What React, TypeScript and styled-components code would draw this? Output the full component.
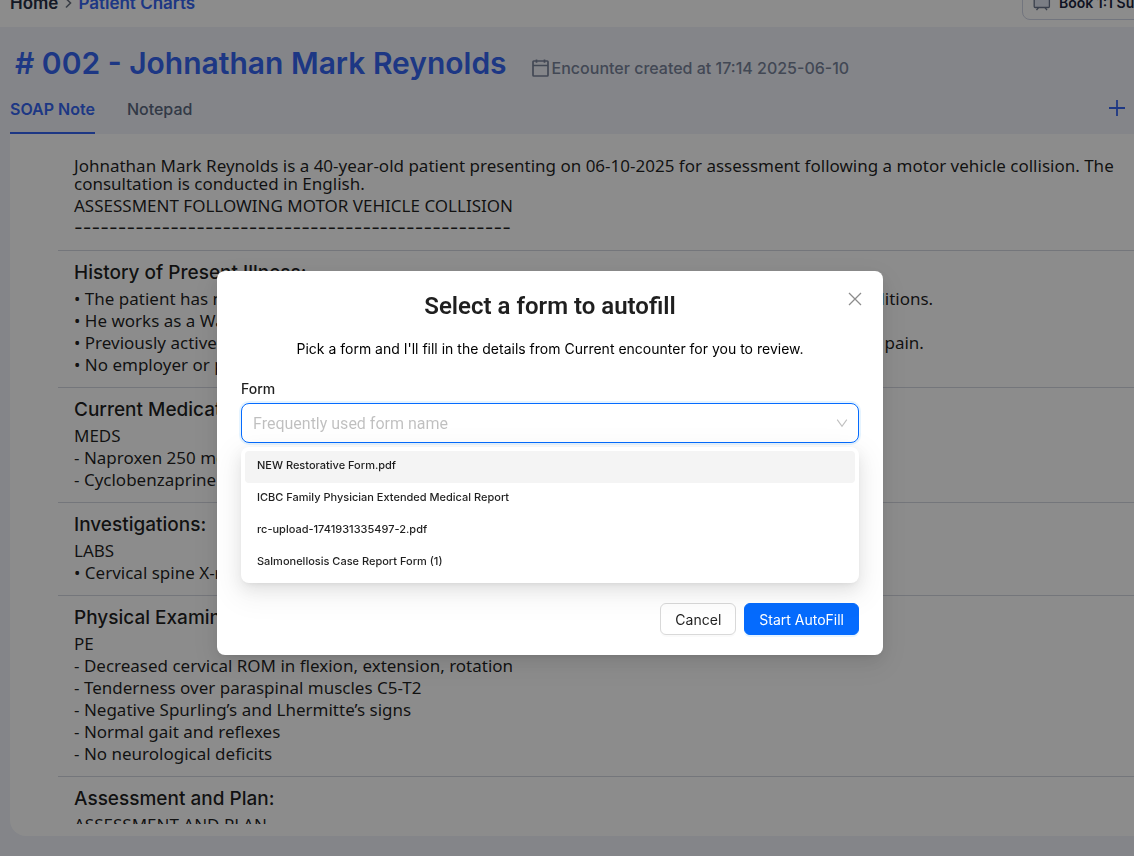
import React, { useState } from "react";
import styled, { createGlobalStyle } from "styled-components";

const BLUE = "#3565f0";
const PRIMARY = "#056bfe";

const GlobalStyle = createGlobalStyle`
  * { box-sizing: border-box; }
  html, body { margin: 0; overflow: hidden; }
  body {
    font-family: Inter, "Noto Sans", sans-serif;
    font-size: 16px;
    color: rgba(0, 0, 0, 0.88);
    background: #f0f3fa;
  }
  h1, h2, p, ul { margin: 0; padding: 0; }
  ul { list-style: none; }
  button, select { font-family: inherit; }
`;

const Page = styled.div`
  display: flex;
  flex-direction: column;
  height: 100vh;
  padding-bottom: 20px;
  overflow: hidden;
`;

const TopBar = styled.header`
  display: flex;
  align-items: flex-end;
  justify-content: space-between;
  flex: none;
  height: 27px;
  padding-left: 10px;
  background: #ffffff;
  overflow: hidden;
`;

const Breadcrumb = styled.nav`
  display: flex;
  align-items: center;
  gap: 4px;
  height: 24px;
  margin-bottom: 12px;
  font-size: 17px;
  font-weight: 600;
  white-space: nowrap;
`;

const Crumb = styled.a<{ $active?: boolean }>`
  color: ${(p) => (p.$active ? BLUE : "#262f45")};
  text-decoration: none;
`;

const SupportButton = styled.button`
  display: flex;
  align-items: center;
  flex: none;
  gap: 8px;
  height: 36px;
  margin: 0 -48px 7px 0;
  padding: 0 10px;
  border: 1px solid #d0d5e6;
  border-radius: 8px;
  background: #ffffff;
  color: #1c2540;
  font-size: 14px;
  font-weight: 600;
  white-space: nowrap;
`;

const TitleRow = styled.div`
  display: flex;
  align-items: center;
  flex: none;
  gap: 25px;
  height: 72px;
  padding-left: 15px;
  white-space: nowrap;
`;

const PatientName = styled.h1`
  color: ${BLUE};
  font-size: 30px;
  font-weight: 600;
  line-height: 40px;
`;

const Created = styled.p`
  display: flex;
  align-items: center;
  gap: 3px;
  padding-top: 10px;
  color: #79839a;
  font-weight: 500;
  line-height: 24px;
`;

const TabBar = styled.div`
  display: flex;
  align-items: stretch;
  flex: none;
  gap: 32px;
  height: 35px;
  padding: 0 8px 0 10px;
`;

const Tab = styled.button<{ $active?: boolean }>`
  padding: 0 0 13px;
  border: 0;
  border-bottom: 2px solid ${(p) => (p.$active ? BLUE : "transparent")};
  background: none;
  color: ${(p) => (p.$active ? BLUE : "#5b6980")};
  font-size: 16px;
  font-weight: ${(p) => (p.$active ? 600 : 500)};
  line-height: 20px;
`;

const AddButton = styled.button`
  display: flex;
  align-items: flex-start;
  margin-left: auto;
  padding: 0;
  border: 0;
  background: none;
  color: ${BLUE};
`;

const NoteCard = styled.main`
  display: flex;
  flex: 1;
  min-height: 0;
  margin-left: 10px;
  padding: 0 0 12px 48px;
  border-radius: 0 0 0 16px;
  background: #ffffff;
`;

const NoteScroll = styled.div`
  flex: 1;
  overflow: hidden;
  font-family: "Noto Sans", sans-serif;
  font-size: 17px;
  white-space: nowrap;
`;

const Intro = styled.div`
  padding: 23px 0 11px 16px;
  line-height: 22px;
`;

const Summary = styled.p`
  margin-bottom: 2px;
  line-height: 18px;
`;

const DashLine = styled.p`
  font-family: Inter, sans-serif;
  font-size: 19px;
`;

const Section = styled.section`
  padding: 9px 0 11px 16px;
  border-top: 1px solid #d4d7e0;
  line-height: 22px;
`;

const SectionTitle = styled.h2`
  margin-bottom: 2px;
  font-family: Inter, sans-serif;
  font-size: 19px;
  font-weight: 500;
  line-height: 26px;
`;

const Overlay = styled.div`
  position: fixed;
  inset: 0;
  display: flex;
  align-items: flex-start;
  justify-content: center;
  padding: 271px 34px 0 0;
  background: rgba(0, 0, 0, 0.45);
`;

const Dialog = styled.div`
  position: relative;
  width: 666px;
  max-width: 100%;
  padding: 18px 24px 20px;
  border-radius: 8px;
  background: #ffffff;
  box-shadow: 0 6px 16px rgba(0, 0, 0, 0.08), 0 3px 6px -4px rgba(0, 0, 0, 0.12),
    0 9px 28px 8px rgba(0, 0, 0, 0.05);
`;

const CloseButton = styled.button`
  position: absolute;
  top: 17px;
  right: 17px;
  display: flex;
  align-items: center;
  justify-content: center;
  width: 22px;
  height: 22px;
  padding: 0;
  border: 0;
  background: none;
  color: rgba(0, 0, 0, 0.45);
`;

const DialogTitle = styled.h2`
  font-family: Roboto, sans-serif;
  font-size: 24px;
  font-weight: 600;
  line-height: 34px;
  text-align: center;
`;

const DialogText = styled.p`
  margin-top: 15px;
  color: #000000;
  font-size: 14px;
  line-height: 22px;
  text-align: center;
`;

const Field = styled.div`
  position: relative;
  margin-top: 18px;
`;

const FieldLabel = styled.label`
  display: block;
  margin-bottom: 3px;
  font-size: 14px;
  font-weight: 500;
  line-height: 22px;
`;

const SelectBox = styled.div`
  display: grid;
  align-items: center;
  > * { grid-area: 1 / 1; }
  > svg {
    justify-self: end;
    margin-right: 11px;
    color: rgba(0, 0, 0, 0.25);
    pointer-events: none;
  }
`;

const FormSelect = styled.select`
  appearance: none;
  width: 100%;
  height: 40px;
  padding: 0 11px;
  border: 1px solid ${PRIMARY};
  border-radius: 8px;
  outline: 0;
  background: #ffffff;
  box-shadow: 0 0 0 2px rgba(5, 145, 255, 0.1);
  color: rgba(0, 0, 0, 0.25);
  font-family: Roboto, sans-serif;
  font-size: 16px;
`;

const Menu = styled.ul`
  position: absolute;
  top: 100%;
  left: 0;
  right: 0;
  margin-top: 4px;
  padding: 4px;
  border-radius: 8px;
  background: #ffffff;
  box-shadow: 0 6px 16px rgba(0, 0, 0, 0.08), 0 3px 6px -4px rgba(0, 0, 0, 0.12),
    0 9px 28px 8px rgba(0, 0, 0, 0.05);
`;

const MenuItem = styled.li<{ $active?: boolean }>`
  height: 32px;
  padding: 0 12px;
  border-radius: 4px;
  background: ${(p) => (p.$active ? "#f4f4f4" : "transparent")};
  font-size: 11px;
  font-weight: 500;
  line-height: 28px;
`;

const Footer = styled.div`
  display: flex;
  justify-content: flex-end;
  gap: 8px;
  margin-top: 160px;
`;

const ActionButton = styled.button<{ $primary?: boolean }>`
  height: 32px;
  padding: 0 14px;
  border: 1px solid ${(p) => (p.$primary ? PRIMARY : "#d9d9d9")};
  border-radius: 6px;
  background: ${(p) => (p.$primary ? PRIMARY : "#ffffff")};
  box-shadow: 0 2px 0 ${(p) => (p.$primary ? "rgba(5, 145, 255, 0.1)" : "rgba(0, 0, 0, 0.02)")};
  color: ${(p) => (p.$primary ? "#ffffff" : "rgba(0, 0, 0, 0.88)")};
  font-size: 14px;
`;

const sections = [
  {
    title: "History of Present Illness:",
    lines: [
      "• The patient has no significant prior medical history and reported no other relevant pre-existing conditions.",
      "• He works as a Warehouse supervisor.",
      "• Previously active with regular exercise, he is now limited in daily activities from neck and upper back pain.",
      "• No employer or prior claims reported.",
    ],
  },
  { title: "Current Medications:", lines: ["MEDS", "- Naproxen 250 mg", "- Cyclobenzaprine 10 mg"] },
  { title: "Investigations:", lines: ["LABS", "• Cervical spine X-ray"] },
  {
    title: "Physical Examination:",
    lines: [
      "PE",
      "- Decreased cervical ROM in flexion, extension, rotation",
      "- Tenderness over paraspinal muscles C5-T2",
      "- Negative Spurling’s and Lhermitte’s signs",
      "- Normal gait and reflexes",
      "- No neurological deficits",
    ],
  },
  { title: "Assessment and Plan:", lines: ["ASSESSMENT AND PLAN"] },
];

const forms = [
  "NEW Restorative Form.pdf",
  "ICBC Family Physician Extended Medical Report",
  "rc-upload-1741931335497-2.pdf",
  "Salmonellosis Case Report Form (1)",
];

const ChevronRight = () => (
  <svg width="12" height="14" viewBox="0 0 12 14" fill="none" stroke="#6b7280" strokeWidth="1.6">
    <path d="M4 2.5 8.5 7 4 11.5" />
  </svg>
);

const BoardIcon = () => (
  <svg width="18" height="20" viewBox="0 0 18 20" fill="none" stroke="#6b768c" strokeWidth="1.3">
    <rect x="1.2" y="3" width="15.2" height="12.5" rx="1" fill="#e1e6f2" />
    <path d="m5.5 15.5-2 2.7M12 15.5l2 2.7" />
  </svg>
);

const CalendarIcon = () => (
  <svg width="17" height="18" viewBox="0 0 17 18" fill="none" stroke="currentColor" strokeWidth="1.7">
    <rect x="1" y="2" width="15" height="15" rx="0.8" />
    <path d="M1 6.5h15M4.5.6v3.2M12.5.6v3.2" />
  </svg>
);

const PlusIcon = () => (
  <svg width="18" height="18" viewBox="0 0 18 18" stroke="currentColor" strokeWidth="1.8">
    <path d="M1 9h16M9 1v16" />
  </svg>
);

const CloseIcon = () => (
  <svg width="14" height="14" viewBox="0 0 14 14" stroke="currentColor" strokeWidth="1.3">
    <path d="m1 1 12 12M13 1 1 13" />
  </svg>
);

const ChevronDown = () => (
  <svg width="12" height="12" viewBox="0 0 12 12" fill="none" stroke="currentColor" strokeWidth="1.1">
    <path d="M1.2 2.6 6 9.2l4.8-6.6" />
  </svg>
);

export default function App() {
  const [value, setValue] = useState("");
  return (
    <>
      <GlobalStyle />
      <Page>
        <TopBar>
          <Breadcrumb aria-label="Breadcrumb">
            <Crumb href="#home">Home</Crumb>
            <ChevronRight />
            <Crumb href="#charts" $active>Patient Charts</Crumb>
          </Breadcrumb>
          <SupportButton type="button">
            <BoardIcon />
            Book 1:1 Support
          </SupportButton>
        </TopBar>
        <TitleRow>
          <PatientName># 002 - Johnathan Mark Reynolds</PatientName>
          <Created>
            <CalendarIcon />
            Encounter created at 17:14 2025-06-10
          </Created>
        </TitleRow>
        <TabBar>
          <Tab type="button" $active>SOAP Note</Tab>
          <Tab type="button">Notepad</Tab>
          <AddButton type="button" aria-label="Add note"><PlusIcon /></AddButton>
        </TabBar>
        <NoteCard>
          <NoteScroll>
            <Intro>
              <Summary>
                Johnathan Mark Reynolds is a 40-year-old patient presenting on 06-10-2025 for assessment following a motor vehicle collision. The
                <br />
                consultation is conducted in English.
              </Summary>
              <p>ASSESSMENT FOLLOWING MOTOR VEHICLE COLLISION</p>
              <DashLine>--------------------------------------------------</DashLine>
            </Intro>
            {sections.map((s) => (
              <Section key={s.title}>
                <SectionTitle>{s.title}</SectionTitle>
                {s.lines.map((line) => <p key={line}>{line}</p>)}
              </Section>
            ))}
          </NoteScroll>
        </NoteCard>
      </Page>
      <Overlay>
        <Dialog role="dialog" aria-modal="true" aria-labelledby="dialog-title">
          <CloseButton type="button" aria-label="Close"><CloseIcon /></CloseButton>
          <DialogTitle id="dialog-title">Select a form to autofill</DialogTitle>
          <DialogText>Pick a form and I'll fill in the details from Current encounter for you to review.</DialogText>
          <Field>
            <FieldLabel htmlFor="form-select">Form</FieldLabel>
            <SelectBox>
              <FormSelect id="form-select" value={value} onChange={(e) => setValue(e.target.value)}>
                <option value="">Frequently used form name</option>
                {forms.map((f) => <option key={f}>{f}</option>)}
              </FormSelect>
              <ChevronDown />
            </SelectBox>
            <Menu role="listbox" aria-label="Form">
              {forms.map((f, i) => (
                <MenuItem key={f} role="option" aria-selected={i === 0} $active={i === 0} onClick={() => setValue(f)}>
                  {f}
                </MenuItem>
              ))}
            </Menu>
          </Field>
          <Footer>
            <ActionButton type="button">Cancel</ActionButton>
            <ActionButton type="button" $primary>Start AutoFill</ActionButton>
          </Footer>
        </Dialog>
      </Overlay>
    </>
  );
}
